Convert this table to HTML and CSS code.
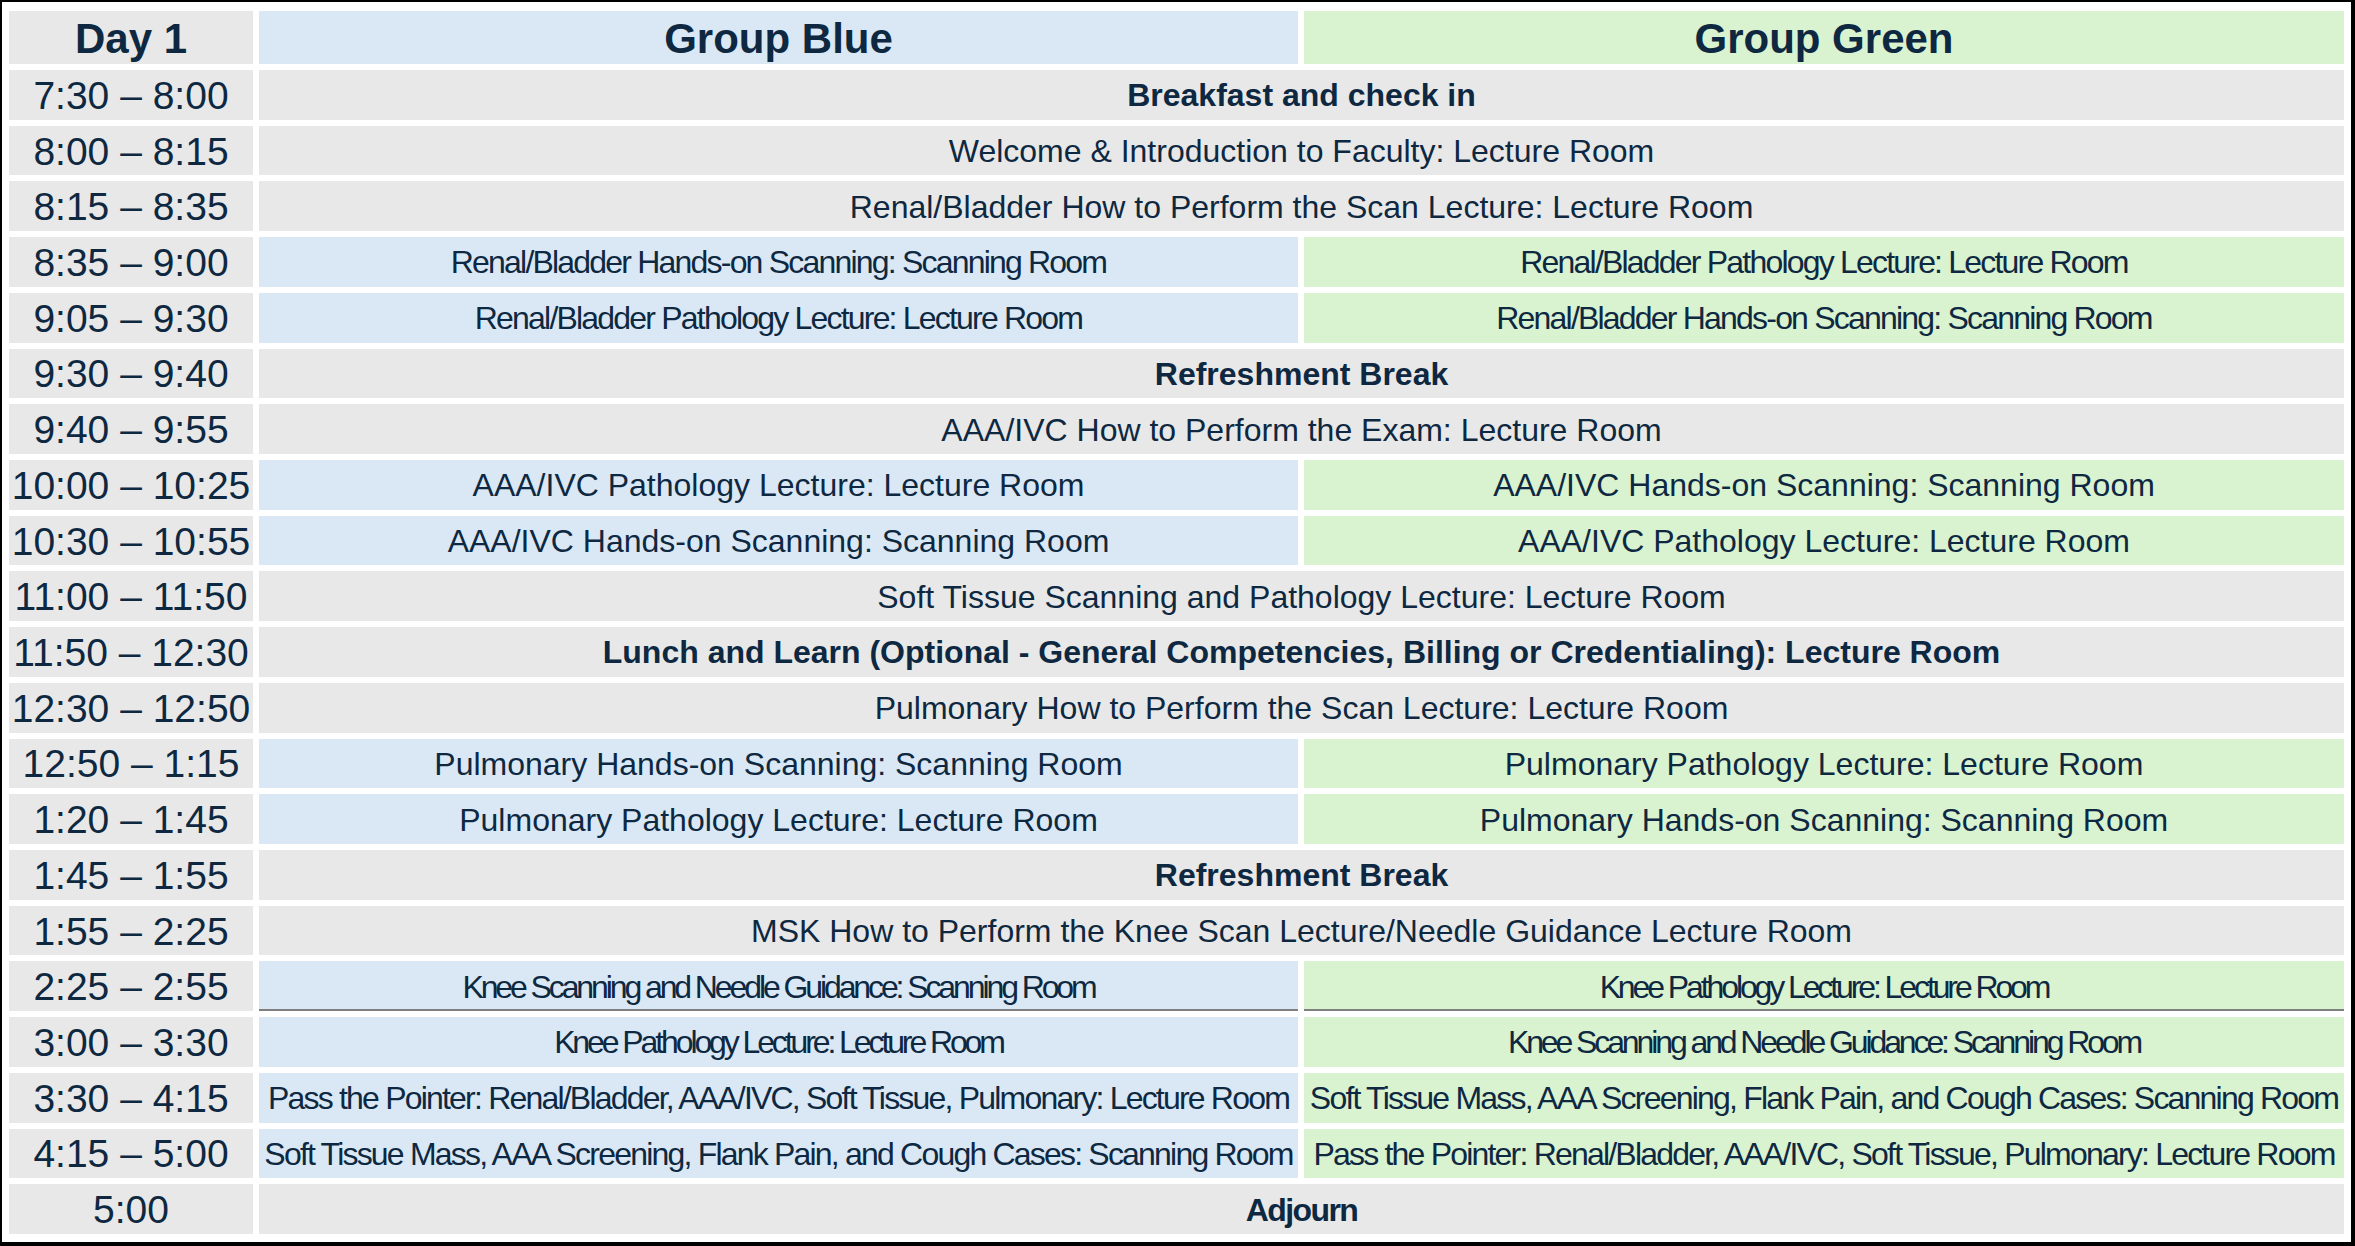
FILE: index.html
```html
<!DOCTYPE html>
<html lang="en">
<head>
<meta charset="utf-8">
<title>Day 1 Schedule</title>
<link rel="stylesheet" href="styles.css">
</head>
<body>
<div class="sheet">
  <div class="grid">
    <div class="cell head gray">Day 1</div>
    <div class="cell head blue">Group Blue</div>
    <div class="cell head green">Group Green</div>

    <div class="cell time">7:30 – 8:00</div>
    <div class="cell span gray bold">Breakfast and check in</div>

    <div class="cell time">8:00 – 8:15</div>
    <div class="cell span gray">Welcome &amp; Introduction to Faculty: Lecture Room</div>

    <div class="cell time">8:15 – 8:35</div>
    <div class="cell span gray">Renal/Bladder How to Perform the Scan Lecture: Lecture Room</div>

    <div class="cell time">8:35 – 9:00</div>
    <div class="cell blue tight">Renal/Bladder Hands-on Scanning: Scanning Room</div>
    <div class="cell green tight">Renal/Bladder Pathology Lecture: Lecture Room</div>

    <div class="cell time">9:05 – 9:30</div>
    <div class="cell blue tight">Renal/Bladder Pathology Lecture: Lecture Room</div>
    <div class="cell green tight">Renal/Bladder Hands-on Scanning: Scanning Room</div>

    <div class="cell time">9:30 – 9:40</div>
    <div class="cell span gray bold">Refreshment Break</div>

    <div class="cell time">9:40 – 9:55</div>
    <div class="cell span gray">AAA/IVC How to Perform the Exam: Lecture Room</div>

    <div class="cell time">10:00 – 10:25</div>
    <div class="cell blue">AAA/IVC Pathology Lecture: Lecture Room</div>
    <div class="cell green">AAA/IVC Hands-on Scanning: Scanning Room</div>

    <div class="cell time">10:30 – 10:55</div>
    <div class="cell blue">AAA/IVC Hands-on Scanning: Scanning Room</div>
    <div class="cell green">AAA/IVC Pathology Lecture: Lecture Room</div>

    <div class="cell time">11:00 – 11:50</div>
    <div class="cell span gray">Soft Tissue Scanning and Pathology Lecture: Lecture Room</div>

    <div class="cell time">11:50 – 12:30</div>
    <div class="cell span gray bold">Lunch and Learn (Optional - General Competencies, Billing or Credentialing): Lecture Room</div>

    <div class="cell time">12:30 – 12:50</div>
    <div class="cell span gray">Pulmonary How to Perform the Scan Lecture: Lecture Room</div>

    <div class="cell time">12:50 – 1:15</div>
    <div class="cell blue">Pulmonary Hands-on Scanning: Scanning Room</div>
    <div class="cell green">Pulmonary Pathology Lecture: Lecture Room</div>

    <div class="cell time">1:20 – 1:45</div>
    <div class="cell blue">Pulmonary Pathology Lecture: Lecture Room</div>
    <div class="cell green">Pulmonary Hands-on Scanning: Scanning Room</div>

    <div class="cell time">1:45 – 1:55</div>
    <div class="cell span gray bold">Refreshment Break</div>

    <div class="cell time">1:55 – 2:25</div>
    <div class="cell span gray">MSK How to Perform the Knee Scan Lecture/Needle Guidance Lecture Room</div>

    <div class="cell time">2:25 – 2:55</div>
    <div class="cell blue tighter rule">Knee Scanning and Needle Guidance: Scanning Room</div>
    <div class="cell green tighter rule">Knee Pathology Lecture: Lecture Room</div>

    <div class="cell time">3:00 – 3:30</div>
    <div class="cell blue tighter">Knee Pathology Lecture: Lecture Room</div>
    <div class="cell green tighter">Knee Scanning and Needle Guidance: Scanning Room</div>

    <div class="cell time">3:30 – 4:15</div>
    <div class="cell blue tight">Pass the Pointer: Renal/Bladder, AAA/IVC, Soft Tissue, Pulmonary: Lecture Room</div>
    <div class="cell green tight">Soft Tissue Mass, AAA Screening, Flank Pain, and Cough Cases: Scanning Room</div>

    <div class="cell time">4:15 – 5:00</div>
    <div class="cell blue tight">Soft Tissue Mass, AAA Screening, Flank Pain, and Cough Cases: Scanning Room</div>
    <div class="cell green tight">Pass the Pointer: Renal/Bladder, AAA/IVC, Soft Tissue, Pulmonary: Lecture Room</div>

    <div class="cell time">5:00</div>
    <div class="cell span gray bold condensed">Adjourn</div>
  </div>
</div>
</body>
</html>
```
FILE: styles.css
```css
html, body {
  margin: 0;
  padding: 0;
  background: #ffffff;
}

.sheet {
  box-sizing: border-box;
  width: 2355px;
  height: 1246px;
  background: #ffffff;
  border-style: solid;
  border-color: #000000;
  border-width: 2px 4px 4px 2px;
  padding: 9px 7px 8px 7px;
  font-family: "Liberation Sans", Arial, sans-serif;
  color: #0e2841;
}

.grid {
  display: grid;
  height: 100%;
  grid-template-columns: 244px 1039px 1040px;
  grid-template-rows: 53px repeat(21, 1fr);
  gap: 6px;
}

.cell {
  display: flex;
  align-items: center;
  justify-content: center;
  white-space: nowrap;
  font-size: 32px;
  line-height: 1;
  padding-top: 1px;
}

.gray { background: #e8e8e8; }
.blue { background: #dae8f6; }
.green { background: #d9f2d0; }

.head {
  font-size: 42px;
  font-weight: bold;
  padding-top: 2px;
}

.time {
  background: #e8e8e8;
  font-size: 39px;
}

.span {
  grid-column: span 2;
}

.bold {
  font-weight: bold;
}

.tight {
  letter-spacing: -1.8px;
}

.tighter {
  letter-spacing: -3.1px;
}

.condensed {
  letter-spacing: -1.6px;
}

.rule {
  box-shadow: inset 0 -2px 0 #7f7f7f;
}
```
